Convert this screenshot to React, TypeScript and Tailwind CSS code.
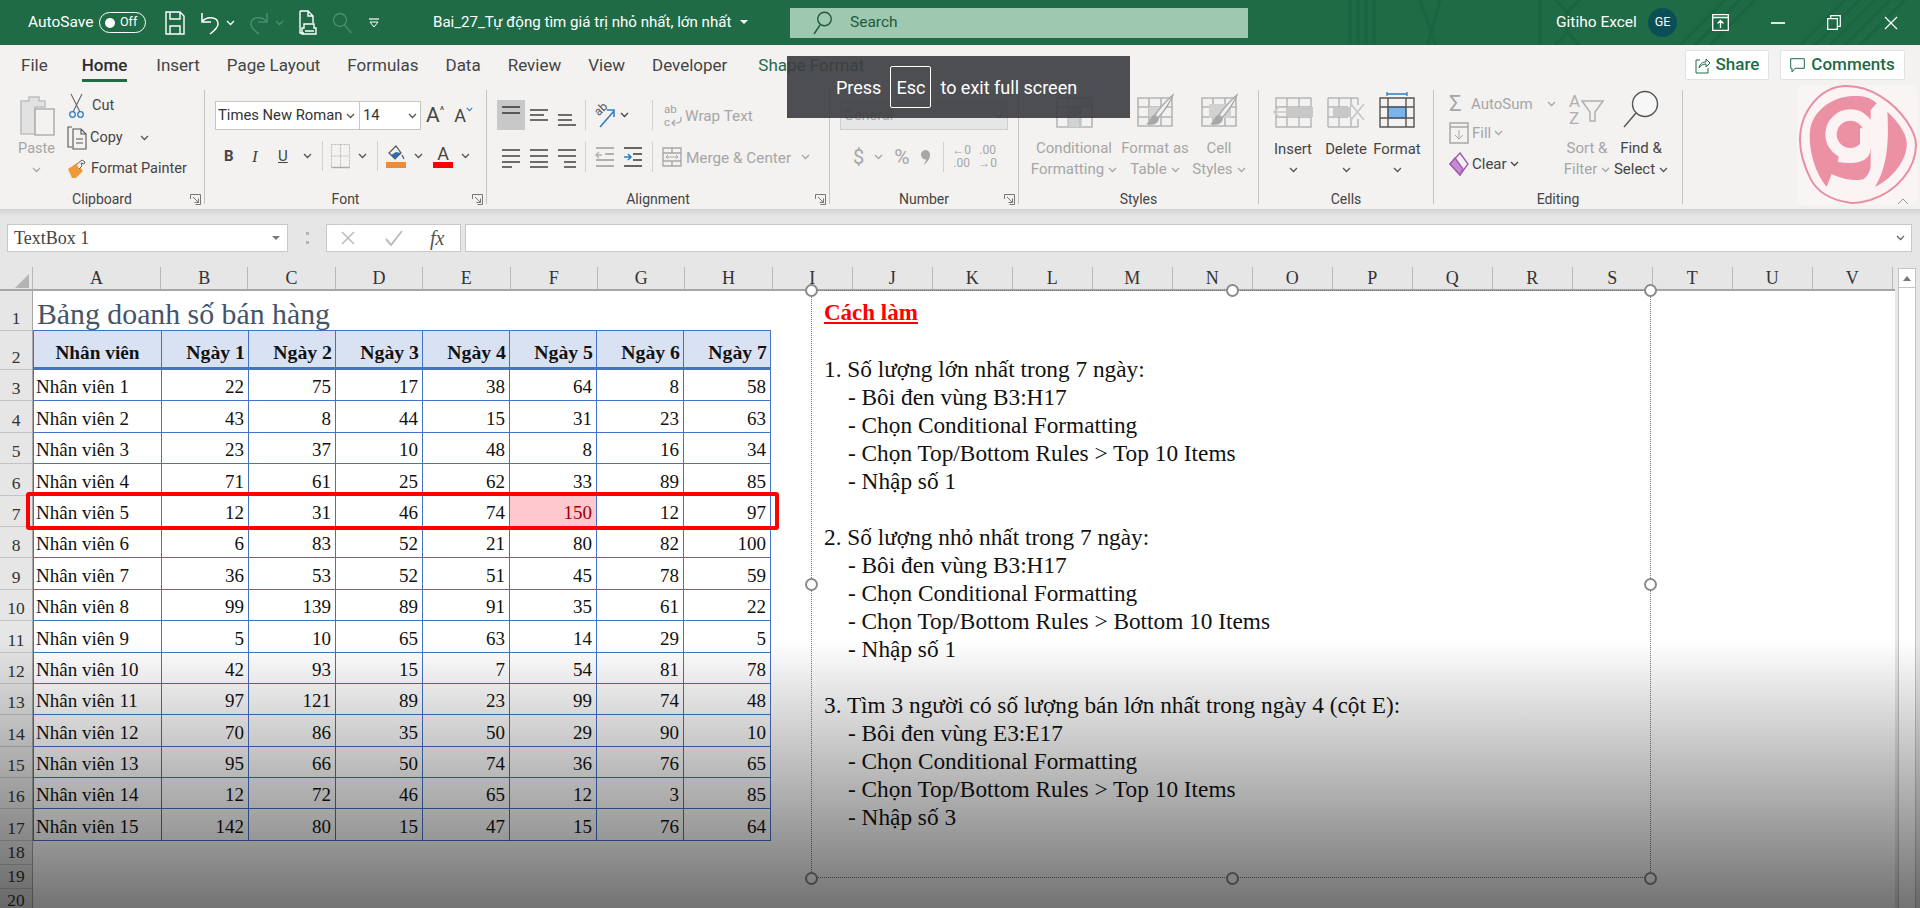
import type { ReactNode } from "react";

const rows = [
  [22, 75, 17, 38, 64, 8, 58],
  [43, 8, 44, 15, 31, 23, 63],
  [23, 37, 10, 48, 8, 16, 34],
  [71, 61, 25, 62, 33, 89, 85],
  [12, 31, 46, 74, 150, 12, 97],
  [6, 83, 52, 21, 80, 82, 100],
  [36, 53, 52, 51, 45, 78, 59],
  [99, 139, 89, 91, 35, 61, 22],
  [5, 10, 65, 63, 14, 29, 5],
  [42, 93, 15, 7, 54, 81, 78],
  [97, 121, 89, 23, 99, 74, 48],
  [70, 86, 35, 50, 29, 90, 10],
  [95, 66, 50, 74, 36, 76, 65],
  [12, 72, 46, 65, 12, 3, 85],
  [142, 80, 15, 47, 15, 76, 64],
];

const tabs = ["Insert", "Page Layout", "Formulas", "Data", "Review", "View", "Developer"];
const narrowCols = ["I", "J", "K", "L", "M", "N", "O", "P", "Q", "R", "S", "T", "U", "V"];

const noteLines = [
  { t: "", indent: false },
  { t: "1. Số lượng lớn nhất trong 7 ngày:", indent: false },
  { t: "- Bôi đen vùng B3:H17", indent: true },
  { t: "- Chọn Conditional Formatting", indent: true },
  { t: "- Chọn Top/Bottom Rules > Top 10 Items", indent: true },
  { t: "- Nhập số 1", indent: true },
  { t: "", indent: false },
  { t: "2. Số lượng nhỏ nhất trong 7 ngày:", indent: false },
  { t: "- Bôi đen vùng B3:H17", indent: true },
  { t: "- Chọn Conditional Formatting", indent: true },
  { t: "- Chọn Top/Bottom Rules > Bottom 10 Items", indent: true },
  { t: "- Nhập số 1", indent: true },
  { t: "", indent: false },
  { t: "3. Tìm 3 người có số lượng bán lớn nhất trong ngày 4 (cột E):", indent: false },
  { t: "- Bôi đen vùng E3:E17", indent: true },
  { t: "- Chọn Conditional Formatting", indent: true },
  { t: "- Chọn Top/Bottom Rules > Top 10 Items", indent: true },
  { t: "- Nhập số 3", indent: true },
];

const handles = [
  "left-[-7px] top-[-7px]",
  "left-[414px] top-[-7px]",
  "left-[832px] top-[-7px]",
  "left-[-7px] top-[287px]",
  "left-[832px] top-[287px]",
  "left-[-7px] top-[581px]",
  "left-[414px] top-[581px]",
  "left-[832px] top-[581px]",
];

function Chev({ className = "text-[#555]" }: { className?: string }) {
  return (
    <svg width="9" height="6" viewBox="0 0 9 6" className={`shrink-0 ${className}`}>
      <path d="M1 1l3.5 3.5L8 1" fill="none" stroke="currentColor" strokeWidth="1.3" />
    </svg>
  );
}

function Launcher() {
  return (
    <svg width="11" height="11" viewBox="0 0 11 11" className="absolute right-[3px] top-[5px] text-[#777]">
      <path d="M.5 5V.5H10.5V10.5H5.5M3 3l5.5 5.5M8.5 4.5v4h-4" fill="none" stroke="currentColor" />
    </svg>
  );
}

function Divider() {
  return <div className="w-px h-[114px] mt-[5px] bg-[#c4c4c4] shrink-0" />;
}

function Group({ width, label, launcher, children }: { width: string; label: string; launcher?: boolean; children: ReactNode }) {
  return (
    <div className={`flex flex-col h-full shrink-0 ${width}`}>
      <div className="flex-1 min-h-0">{children}</div>
      <div className="relative h-[20px] leading-[20px] text-center text-[14px] text-[#444]">
        {label}
        {launcher && <Launcher />}
      </div>
    </div>
  );
}

function Lines({ ys, widths, color = "#555" }: { ys: number[]; widths?: number[]; color?: string }) {
  return (
    <svg width="20" height="24" viewBox="0 0 20 24" className="shrink-0">
      {ys.map((y, i) => {
        const w = widths ? widths[i] : 18;
        return <path key={y} d={`M${widths && widths[i] < 0 ? 19 + widths[i] : 1} ${y}h${Math.abs(w)}`} stroke={color} strokeWidth="1.7" />;
      })}
    </svg>
  );
}

function SheetIcon({ children }: { children?: ReactNode }) {
  return (
    <svg width="38" height="36" viewBox="0 0 38 36" className="shrink-0">
      <g fill="none" stroke="#b5b5b5" strokeWidth="1.6">
        <path d="M2 6h34v28H2zM2 15h34M2 25h34M13 6v28M25 6v28" />
      </g>
      {children}
    </svg>
  );
}

function Brush() {
  return (
    <g>
      <path d="M37 3c-3 8-9 16-15 23l-3-3C24 16 31 8 37 3z" fill="#f3f2f1" stroke="#a8a8a8" strokeWidth="1.4" />
      <path d="M18 23c-4 1-3 6-8 9 6 2 12 0 13-5z" fill="#a8a8a8" />
    </g>
  );
}

function StackCol({ label1, label2, width, children, dim }: { label1: string; label2: string; width: string; children: ReactNode; dim?: boolean }) {
  return (
    <div className={`flex flex-col items-center ${width} ${dim ? "text-[#a6a6a6]" : "text-[#444]"}`}>
      <div className="h-[36px] flex items-end justify-center">{children}</div>
      <div className="mt-[10px] h-[21px] leading-[21px] whitespace-nowrap text-[15px]">{label1}</div>
      <div className="h-[21px] leading-[21px] whitespace-nowrap text-[15px] flex items-center gap-[4px]">
        {label2}
        <Chev className={dim ? "text-[#a6a6a6]" : "text-[#555]"} />
      </div>
    </div>
  );
}

function TitleBar() {
  return (
    <div className="relative h-[45px] shrink-0 bg-[#1e6b46] flex items-center text-white overflow-hidden">
      <svg width="640" height="45" viewBox="0 0 640 45" className="absolute right-0 top-0 text-[#1a6040]">
        <g fill="none" stroke="currentColor" strokeWidth="3" opacity="0.6">
          <path d="M70 0v45M78 0v45M86 0v45M94 0v45M140 0l16 45M160 0l-12 45M260 0v45M275 0c20 15 20 30 0 45M300 0c-20 15-20 30 0 45" />
          <path d="M400 45l45-45M415 45l45-45M430 45l45-45M520 45l45-45M535 45l45-45M550 45l45-45M565 45l45-45M580 45l45-45" />
        </g>
      </svg>
      <span className="relative ml-[28px] w-[62px] text-[15.5px] whitespace-nowrap">AutoSave</span>
      <div className="relative ml-[9px] w-[47px] h-[21px] rounded-full border border-white flex items-center pl-[5px] gap-[5px]">
        <span className="w-[10px] h-[10px] rounded-full bg-white" />
        <span className="text-[12.5px] leading-none">Off</span>
      </div>
      <svg width="20" height="24" viewBox="0 0 20 24" className="relative ml-[19px]">
        <path d="M1 1h14l4 4v18H1zM5 1v7h10V1M5 23v-8h10v8" fill="none" stroke="white" strokeWidth="1.4" />
      </svg>
      <svg width="20" height="24" viewBox="0 0 20 24" className="relative ml-[15px]">
        <path d="M2 2v9h9M2 11C6 5 18 5 18 13c0 4-4 7-8 10" fill="none" stroke="white" strokeWidth="1.5" />
      </svg>
      <Chev className="relative ml-[6px] text-white" />
      <svg width="20" height="24" viewBox="0 0 20 24" className="relative ml-[14px]">
        <path d="M18 2v9H9M18 11C14 5 2 5 2 13c0 4 4 7 8 10" fill="none" stroke="#4c8d6d" strokeWidth="1.5" />
      </svg>
      <Chev className="relative ml-[6px] text-[#4c8d6d]" />
      <svg width="18" height="26" viewBox="0 0 18 26" className="relative ml-[15px]">
        <path d="M1 1h8l5 5v7M9 1v5h5M1 1v22h4M5 14h10v4h2v6H3v-6h2zM6 21h9" fill="none" stroke="white" strokeWidth="1.4" />
      </svg>
      <svg width="20" height="22" viewBox="0 0 20 22" className="relative ml-[15px]">
        <circle cx="8" cy="8" r="6.5" fill="none" stroke="#4c8d6d" strokeWidth="1.4" />
        <path d="M12.5 13l7 8" stroke="#4c8d6d" strokeWidth="1.4" />
      </svg>
      <svg width="10" height="10" viewBox="0 0 10 10" className="relative ml-[17px]">
        <path d="M0 1h10" stroke="white" strokeWidth="1.2" />
        <path d="M1 4h8l-4 5z" fill="none" stroke="white" strokeWidth="1" />
      </svg>
      <div className="relative ml-[54px] w-[357px] flex items-center gap-[9px] text-[15.1px] whitespace-nowrap">
        <span>Bai_27_Tự động tìm giá trị nhỏ nhất, lớn nhất</span>
        <span className="w-0 h-0 border-x-[4px] border-x-transparent border-t-[4px] border-t-white" />
      </div>
      <div className="relative w-[458px] h-[30px] bg-[#9fc8b0] flex items-center pl-[23px] text-[#1d5a3e] text-[15.5px]">
        <svg width="19" height="24" viewBox="0 0 19 24">
          <circle cx="11.5" cy="8" r="6.8" fill="none" stroke="#1d5a3e" strokeWidth="1.4" />
          <path d="M7 14l-6 9" stroke="#1d5a3e" strokeWidth="1.4" />
        </svg>
        <span className="ml-[18px]">Search</span>
      </div>
      <span className="relative ml-[308px] w-[79px] text-[15.5px] whitespace-nowrap">Gitiho Excel</span>
      <div className="relative ml-[13px] w-[29px] h-[29px] rounded-full bg-[#0b4f56] flex items-center justify-center text-[12.5px]">GE</div>
      <svg width="17" height="17" viewBox="0 0 17 17" className="relative ml-[35px]">
        <path d="M.7.7h15.6v15.6H.7zM.7 3.5h15.6M8.5 14V7M5.5 9.5l3-3 3 3" fill="none" stroke="white" strokeWidth="1.3" />
      </svg>
      <div className="relative ml-[42px] w-[14px] h-[2px] bg-[#dfe9e3]" />
      <svg width="14" height="15" viewBox="0 0 14 15" className="relative ml-[42px]">
        <path d="M.7 3.7h9.6v10.6H.7zM3.7 3.7V.7h9.6v10.6h-3" fill="none" stroke="white" strokeWidth="1.2" />
      </svg>
      <svg width="14" height="14" viewBox="0 0 14 14" className="relative ml-[43px]">
        <path d="M1 1l12 12M13 1L1 13" stroke="white" strokeWidth="1.2" />
      </svg>
    </div>
  );
}

function TabRow() {
  return (
    <div className="h-[40px] shrink-0 bg-[#f3f2f1] flex pl-[21px] pt-[2px] gap-[27px] text-[17px] text-[#444]">
      <div className="leading-[36px] mr-[7px]">File</div>
      <div className="h-[35px] leading-[36px] mr-[2px] border-b-[3px] border-[#1e6b46] font-medium text-[#2c2c2c]">Home</div>
      {tabs.map(t => (
        <div key={t} className="leading-[36px] whitespace-nowrap">
          {t}
        </div>
      ))}
      <div className="leading-[36px] ml-[4px] whitespace-nowrap text-[#1e6b46]">Shape Format</div>
      <div className="ml-auto mr-[15px] flex gap-[11px] pt-[3px] text-[#1e6b46] font-medium">
        <div className="w-[84px] h-[30px] bg-white border border-[#e2e2e2] rounded-[2px] flex items-center justify-center gap-[6px]">
          <svg width="15" height="17" viewBox="0 0 15 17">
            <path d="M5 3H1v13h12v-5M4 11c1-5 4-6 7-6V2l4 4-4 4V7c-3 0-5 1-7 4z" fill="none" stroke="#1e6b46" strokeWidth="1" />
          </svg>
          Share
        </div>
        <div className="w-[125px] h-[30px] bg-white border border-[#e2e2e2] rounded-[2px] flex items-center justify-center gap-[6px]">
          <svg width="15" height="15" viewBox="0 0 15 15">
            <path d="M.7.7h13.6v9.6H5L2 14v-3.7H.7z" fill="none" stroke="#1e6b46" strokeWidth="1" />
          </svg>
          Comments
        </div>
      </div>
    </div>
  );
}

function Clipboard() {
  return (
    <Group width="w-[204px]" label="Clipboard" launcher>
      <div className="flex">
        <div className="ml-[19px] w-[35px] flex flex-col items-center text-[#a6a6a6] text-[14.5px]">
          <svg width="36" height="42" viewBox="0 0 36 42" className="mt-[9px]">
            <path d="M2 7h8V3h10v4h6v6H16v27H2z" fill="#e2e2e2" stroke="#c0c0c0" strokeWidth="1.6" />
            <path d="M16 15h19v26H16z" fill="#f3f2f1" stroke="#b0b0b0" strokeWidth="1.6" />
          </svg>
          <div className="mt-[3px] h-[20px] leading-[20px]">Paste</div>
          <Chev className="mt-[8px] text-[#a6a6a6]" />
        </div>
        <div className="ml-[13px] pt-[5px] flex flex-col text-[14.5px] text-[#444]">
          <div className="h-[32px] flex items-center gap-[8px]">
            <svg width="15" height="26" viewBox="0 0 15 26" className="ml-[2px]">
              <path d="M2 1l9 18M13 1L4 19" stroke="#666" strokeWidth="1.1" />
              <circle cx="3.5" cy="21.5" r="2.8" fill="none" stroke="#2f7fc4" strokeWidth="1.3" />
              <circle cx="11.5" cy="21.5" r="2.8" fill="none" stroke="#2f7fc4" strokeWidth="1.3" />
            </svg>
            Cut
          </div>
          <div className="h-[31px] flex items-center gap-[3px]">
            <svg width="20" height="24" viewBox="0 0 20 24">
              <path d="M5 1H1v20h4M6 3h8l5 5v15H6zM14 3v5h5M9 13h7M9 17h7" fill="none" stroke="#555" strokeWidth="1.1" />
            </svg>
            Copy
            <Chev className="ml-[14px] text-[#555]" />
          </div>
          <div className="h-[31px] flex items-center gap-[4px]">
            <svg width="20" height="22" viewBox="0 0 20 22">
              <path d="M1 11l9-6 6 8-7 7H5z" fill="#ef9a3a" />
              <path d="M10 6l5-4 3 2-1 2-3-1 1 3-3 3" fill="#f3f2f1" stroke="#666" strokeWidth="1" />
            </svg>
            Format Painter
          </div>
        </div>
      </div>
    </Group>
  );
}

function FontGroup() {
  return (
    <Group width="w-[281px]" label="Font" launcher>
      <div className="pl-[10px] pt-[16px] text-[#444]">
        <div className="flex items-center h-[29px]">
          <div className="w-[145px] h-full bg-white border border-[#c8c6c4] flex items-center pl-[2px] text-[14.8px] whitespace-nowrap text-[#333]">
            Times New Roman
            <Chev className="ml-[3px] text-[#555]" />
          </div>
          <div className="w-[61px] h-full bg-white border-y border-r border-[#c8c6c4] flex items-center pl-[3px] text-[14.8px] text-[#333]">
            14
            <Chev className="ml-auto mr-[3px] text-[#555]" />
          </div>
          <span className="ml-[5px] text-[21px] leading-none">A</span>
          <span className="text-[11px] mb-[10px] leading-none">^</span>
          <span className="ml-[10px] text-[18px] leading-none">A</span>
          <svg width="7" height="5" viewBox="0 0 9 6" className="mb-[12px] text-[#2f7fc4]">
            <path d="M1 1l3.5 3.5L8 1" fill="none" stroke="currentColor" strokeWidth="1.5" />
          </svg>
        </div>
        <div className="flex items-center h-[30px] mt-[11px]">
          <span className="ml-[9px] w-[10px] text-[15px] font-bold text-[#444] leading-none">B</span>
          <span className="ml-[18px] w-[8px] font-['Liberation_Serif',serif] italic text-[17px] text-[#444] leading-none">I</span>
          <span className="ml-[18px] w-[12px] text-[15px] text-[#444] underline leading-none">U</span>
          <Chev className="ml-[13px] text-[#555]" />
          <div className="ml-[10px] w-px h-[30px] bg-[#d0d0d0]" />
          <svg width="19" height="25" viewBox="0 0 19 25" className="ml-[8px]">
            <path d="M.5.5h18v23H.5zM9.5.5v23M.5 12h18" fill="none" stroke="#bbb" strokeDasharray="2 1" />
            <path d="M.5 23.5h18" stroke="#aaa" strokeWidth="1.4" />
          </svg>
          <Chev className="ml-[8px] text-[#555]" />
          <div className="ml-[10px] w-px h-[30px] bg-[#d0d0d0]" />
          <div className="ml-[8px] w-[20px] flex flex-col items-center">
            <svg width="17" height="17" viewBox="0 0 17 17">
              <path d="M8 1L1 8l6 6 6-6zM14 10l2 4" fill="#f3f2f1" stroke="#555" strokeWidth="1.2" />
              <path d="M8 7l5 1-6 6-4-4z" fill="#2f6ea8" />
            </svg>
            <div className="w-[20px] h-[6px] bg-[#ed8c33]" />
          </div>
          <Chev className="ml-[8px] text-[#555]" />
          <div className="ml-[10px] w-[20px] flex flex-col items-center">
            <span className="text-[18px] leading-[17px] text-[#444]">A</span>
            <div className="w-[20px] h-[6px] bg-[#f00]" />
          </div>
          <Chev className="ml-[8px] text-[#555]" />
        </div>
      </div>
    </Group>
  );
}

function Alignment() {
  return (
    <Group width="w-[342px]" label="Alignment" launcher>
      <div className="pl-[10px] pt-[15px]">
        <div className="flex items-center h-[30px]">
          <div className="w-[28px] h-[30px] bg-[#c8c8c8] flex items-center justify-center">
            <Lines ys={[4, 10]} color="#444" />
          </div>
          <div className="w-[28px] flex justify-center">
            <Lines ys={[7, 12, 17]} widths={[18, 14, 18]} />
          </div>
          <div className="w-[28px] flex justify-center">
            <Lines ys={[12, 17, 22]} widths={[14, 14, 18]} />
          </div>
          <div className="ml-[4px] w-px h-[30px] bg-[#d0d0d0]" />
          <div className="ml-[8px] w-[22px] h-[25px] relative">
            <span className="absolute left-0 top-[-1px] text-[12px] leading-[14px] text-[#555] -rotate-45">ab</span>
            <svg width="22" height="25" viewBox="0 0 22 25" className="absolute left-0 top-0">
              <path d="M6 24L20 8M13 7h7v7" fill="none" stroke="#2f7fc4" strokeWidth="1.6" />
            </svg>
          </div>
          <Chev className="ml-[4px] text-[#444]" />
          <div className="ml-[23px] w-px h-[30px] bg-[#d0d0d0]" />
          <div className="ml-[11px] flex items-center text-[15.3px] text-[#a6a6a6]">
            <div className="w-[19px] flex flex-col gap-px text-[11.5px] leading-[12px] text-[#a0a0a0]">
              <span>ab</span>
              <div className="flex items-center gap-px">
                <span>c</span>
                <svg width="11" height="9" viewBox="0 0 11 9">
                  <path d="M10 0v2c0 3-2 4-4 4H1M4 3L1 6l3 3" fill="none" stroke="#a8a8a8" strokeWidth="1.2" />
                </svg>
              </div>
            </div>
            <span className="ml-[2px] mt-[2px] whitespace-nowrap">Wrap Text</span>
          </div>
        </div>
        <div className="flex items-center h-[30px] mt-[12px]">
          <div className="w-[28px] flex justify-center">
            <Lines ys={[5, 11, 17, 22]} widths={[18, 18, 18, 10]} />
          </div>
          <div className="w-[28px] flex justify-center">
            <Lines ys={[5, 11, 17, 22]} widths={[18, 18, 18, 18]} />
          </div>
          <div className="w-[28px] flex justify-center">
            <Lines ys={[5, 11, 17, 22]} widths={[18, 18, -12, -12]} />
          </div>
          <div className="ml-[4px] w-px h-[30px] bg-[#d0d0d0]" />
          <svg width="19" height="22" viewBox="0 0 19 22" className="ml-[9px]">
            <path d="M1 2h18M10 8h9M1 14h18M1 20h18" stroke="#b0b0b0" strokeWidth="2" />
            <path d="M7 9H1M4 6L1 9l3 3" fill="none" stroke="#b0b0b0" strokeWidth="1.4" />
          </svg>
          <svg width="19" height="22" viewBox="0 0 19 22" className="ml-[9px]">
            <path d="M1 2h18M10 8h9M10 14h9M1 20h18" stroke="#666" strokeWidth="2" />
            <path d="M1 11h7M5 8l3 3-3 3" fill="none" stroke="#2f7fc4" strokeWidth="1.6" />
          </svg>
          <div className="ml-[10px] w-px h-[30px] bg-[#d0d0d0]" />
          <svg width="20" height="20" viewBox="0 0 20 20" className="ml-[9px]">
            <path d="M1 1h18v18H1zM1 6h18M1 14h18M10 1v5M10 14v5" fill="none" stroke="#a8a8a8" strokeWidth="1.4" />
            <path d="M4 10h12M6 8l-2 2 2 2M14 8l2 2-2 2" fill="none" stroke="#a8a8a8" />
          </svg>
          <span className="ml-[4px] mt-[2px] text-[15.3px] whitespace-nowrap text-[#a6a6a6]">Merge &amp; Center</span>
          <Chev className="ml-[10px] text-[#a6a6a6]" />
        </div>
      </div>
    </Group>
  );
}

function NumberGroup() {
  return (
    <Group width="w-[188px]" label="Number" launcher>
      <div className="pl-[10px] pt-[16px] text-[#a6a6a6]">
        <div className="w-[168px] h-[29px] bg-[#e6e6e6] border border-[#cfcfcf] flex items-center pl-[3px] text-[14.5px]">
          General
          <Chev className="ml-auto mr-[4px] text-[#a6a6a6]" />
        </div>
        <div className="flex items-center h-[30px] mt-[12px]">
          <span className="ml-[13px] text-[20px] leading-none">$</span>
          <Chev className="ml-[10px] text-[#a6a6a6]" />
          <span className="ml-[11px] text-[21px] leading-none">%</span>
          <svg width="9" height="15" viewBox="0 0 9 15" className="ml-[11px]">
            <path d="M4.5 0a4.5 4.5 0 0 1 4.5 5c0 4-3 8-7 10 2-2 3-4 3-5.500a4.500 4.500 0 0 1-.5-9.500z" fill="#a6a6a6" />
          </svg>
          <div className="ml-[13px] w-px h-[30px] bg-[#d0d0d0]" />
          <div className="ml-[8px] text-[12px] leading-[13px] text-center w-[20px]">←0<br />.00</div>
          <div className="ml-[6px] text-[12px] leading-[13px] text-center w-[20px]">.00<br />→0</div>
        </div>
      </div>
    </Group>
  );
}

function Styles() {
  return (
    <Group width="w-[239px]" label="Styles">
      <div className="pl-[10px] pt-[7px] flex">
        <StackCol width="w-[90px]" label1="Conditional" label2="Formatting" dim>
          <svg width="37" height="31" viewBox="0 0 37 31">
            <path d="M1 1h35v29H1z" fill="#f3f2f1" stroke="#b5b5b5" strokeWidth="1.6" />
            <path d="M12 10h14v20H12zM26 1h10v9H26z" fill="#d2d2d2" />
            <path d="M1 10h35M1 20h35M12 1v29M24 1v29" stroke="#b5b5b5" fill="none" />
          </svg>
        </StackCol>
        <StackCol width="w-[72px]" label1="Format as" label2="Table" dim>
          <SheetIcon>
            <path d="M13 15h12v10H13z" fill="#d2d2d2" />
            <Brush />
          </SheetIcon>
        </StackCol>
        <StackCol width="w-[56px]" label1="Cell" label2="Styles" dim>
          <SheetIcon>
            <path d="M9 12h22v14H9z" fill="#d2d2d2" />
            <Brush />
          </SheetIcon>
        </StackCol>
      </div>
    </Group>
  );
}

function CellCol({ label, width, children }: { label: string; width: string; children: ReactNode }) {
  return (
    <div className={`flex flex-col items-center text-[14.8px] text-[#444] ${width}`}>
      <div className="h-[36px] flex items-end">{children}</div>
      <div className="mt-[11px] h-[20px] leading-[20px]">{label}</div>
      <Chev className="mt-[8px] text-[#555]" />
    </div>
  );
}

function Cells() {
  return (
    <Group width="w-[174px]" label="Cells">
      <div className="pl-[7px] pt-[7px] flex">
        <CellCol label="Insert" width="w-[54px]">
          <svg width="40" height="31" viewBox="0 0 40 31">
            <path d="M3 1h35v29H3zM3 10h35M3 20h35M14 1v29M26 1v29" fill="none" stroke="#b5b5b5" strokeWidth="1.4" />
            <path d="M14 10h26v10H14z" fill="#c8c8c8" />
            <path d="M1 15h14M7 9l-6 6 6 6" fill="none" stroke="#c8c8c8" strokeWidth="1.6" />
          </svg>
        </CellCol>
        <CellCol label="Delete" width="w-[52px]">
          <svg width="38" height="31" viewBox="0 0 38 31">
            <path d="M1 1h30M1 30h30M1 10h20M1 20h20M1 1v29M12 1v29M24 1v9M24 20v10M31 1v7M31 22v8" fill="none" stroke="#b5b5b5" strokeWidth="1.4" />
            <path d="M6 10h18v10H6z" fill="#c8c8c8" />
            <path d="M24 7l13 16M37 7L24 23" fill="none" stroke="#c8c8c8" strokeWidth="1.6" />
          </svg>
        </CellCol>
        <CellCol label="Format" width="w-[50px]">
          <svg width="36" height="37" viewBox="0 0 36 37">
            <path d="M8 3h20M8 1v4M28 1v4" stroke="#2f7fc4" strokeWidth="1.3" fill="none" />
            <path d="M9 16h18v11H9z" fill="#7ab4ee" stroke="#2f7fc4" />
            <path d="M1 7h34v29H1zM1 16h34M1 27h34M9 7v29M27 7v29" fill="none" stroke="#555" strokeWidth="1.4" />
          </svg>
        </CellCol>
      </div>
    </Group>
  );
}

function Editing() {
  return (
    <Group width="w-[248px]" label="Editing">
      <div className="flex">
        <div className="pl-[15px] pt-[5px] w-[123px] flex flex-col text-[15px]">
          <div className="h-[28px] flex items-center gap-[3px] text-[#a6a6a6]">
            <span className="text-[22px] leading-none w-[19px]">Σ</span>
            AutoSum
            <Chev className="ml-[11px] text-[#a6a6a6]" />
          </div>
          <div className="h-[26px] flex items-center gap-[3px] text-[#a6a6a6] mt-[2px]">
            <svg width="20" height="22" viewBox="0 0 20 22">
              <path d="M1 1h18v20H1zM1 5h18" fill="none" stroke="#a8a8a8" strokeWidth="1.5" />
              <path d="M10 8v9M6 13l4 4 4-4" fill="none" stroke="#a8a8a8" />
            </svg>
            Fill
            <Chev className="text-[#a6a6a6]" />
          </div>
          <div className="h-[32px] flex items-center gap-[3px] text-[#444] mt-[2px]">
            <svg width="20" height="24" viewBox="0 0 20 24">
              <path d="M11 1l8 11-8 11-10-11z" fill="#f3f2f1" stroke="#a45cb0" strokeWidth="1.4" />
              <path d="M1 12l5-6 8 11-3 6z" fill="#c58ad0" stroke="#a45cb0" strokeWidth="1.4" />
            </svg>
            Clear
            <Chev className="text-[#444]" />
          </div>
        </div>
        <div className="pt-[7px]">
          <StackCol width="w-[60px]" label1="Sort &" label2="Filter" dim>
            <div className="flex items-center h-[36px]">
              <div className="flex flex-col text-[17px] leading-[17px] text-[#b0b0b0]">
                <span>A</span>
                <span>Z</span>
              </div>
              <svg width="24" height="24" viewBox="0 0 24 24" className="ml-[1px]">
                <path d="M1 3h21l-8 11v9H9v-9z" fill="none" stroke="#b0b0b0" strokeWidth="1.5" />
              </svg>
            </div>
          </StackCol>
        </div>
        <div className="pt-[7px]">
          <StackCol width="w-[48px]" label1="Find &" label2="Select">
            <svg width="36" height="38" viewBox="0 0 36 38" className="overflow-visible">
              <circle cx="22" cy="14" r="12.5" fill="#f7f7f7" stroke="#555" strokeWidth="1.4" />
              <path d="M13 23L1 37" stroke="#555" strokeWidth="1.4" />
            </svg>
          </StackCol>
        </div>
      </div>
    </Group>
  );
}

function FormulaBar() {
  return (
    <div className="h-[58px] shrink-0 pt-[15px] pl-[7px] flex items-start bg-linear-to-b from-[#d2d2d2] from-0% to-[#e6e6e6] to-[12%]">
      <div className="w-[281px] h-[28px] bg-white border border-[#c8c8c8] flex items-center pl-[6px] font-['Liberation_Serif',serif] text-[18px] text-[#444]">
        TextBox 1
        <span className="ml-auto mr-[7px] w-0 h-0 border-x-[4px] border-x-transparent border-t-[4px] border-t-[#777]" />
      </div>
      <div className="ml-[18px] mt-[8px] w-[3px] h-[12px] border-y-[3px] border-[#b5b5b5]" />
      <div className="ml-[17px] w-[135px] h-[28px] bg-white border border-[#c8c8c8] flex items-center">
        <svg width="16" height="16" viewBox="0 0 16 16" className="ml-[13px]">
          <path d="M2 2l12 12M14 2L2 14" stroke="#bdbdbd" strokeWidth="1.6" />
        </svg>
        <svg width="18" height="16" viewBox="0 0 18 16" className="ml-[29px]">
          <path d="M1 9l5 6L17 1" fill="none" stroke="#bdbdbd" strokeWidth="2" />
        </svg>
        <span className="ml-[27px] font-['Liberation_Serif',serif] italic text-[20px] leading-none text-[#555]">fx</span>
      </div>
      <div className="ml-[4px] w-[1447px] h-[28px] bg-white border border-[#c8c8c8] flex items-center justify-end pr-[6px]">
        <Chev className="text-[#666]" />
      </div>
    </div>
  );
}

function RowNum({ n, height }: { n: number; height: string }) {
  return (
    <div className={`${height} flex items-end justify-center border-b border-[#c4c4c4] text-[17.5px] leading-[24px] text-[#333]`}>
      {n}
    </div>
  );
}

function Cell({ value, hot }: { value: number; hot: boolean }) {
  return (
    <div
      className={`h-[31.4px] border-r border-b border-[#4472c4] flex items-end justify-end pr-[4px] leading-[26px] ${
        hot ? "bg-[#ffc7ce] text-[#9c0006]" : ""
      }`}
    >
      {value}
    </div>
  );
}

function Sheet() {
  return (
    <div className="flex-1 min-h-0 flex bg-white font-['Liberation_Serif',serif] text-[#111]">
      <div className="w-[1895px] flex flex-col">
        <div className="h-[22px] shrink-0 flex bg-[#e6e6e6] border-b-2 border-[#a6a6a6] box-content text-[18px] leading-[22px] text-[#333] -mb-[2px] relative">
          <div className="w-[33px] relative border-r border-[#b8b8b8]">
            <div className="absolute right-[3px] bottom-[1px] w-0 h-0 border-l-[14px] border-l-transparent border-b-[14px] border-b-[#b4b4b4]" />
          </div>
          <div className="w-[128px] text-center border-r border-[#b8b8b8]">A</div>
          {["B", "C", "D", "E", "F", "G", "H"].map(c => (
            <div key={c} className="w-[87.4px] text-center border-r border-[#b8b8b8]">
              {c}
            </div>
          ))}
          {narrowCols.map(c => (
            <div key={c} className="w-[80px] text-center border-r border-[#b8b8b8]">
              {c}
            </div>
          ))}
        </div>
        <div className="flex flex-1 min-h-0 overflow-hidden">
          <div className="w-[33px] shrink-0 bg-[#e6e6e6] border-r border-[#a6a6a6] flex flex-col">
            <RowNum n={1} height="h-[42px] shrink-0" />
            <RowNum n={2} height="h-[39px] shrink-0" />
            {rows.map((_, i) => (
              <RowNum key={i} n={i + 3} height="h-[31.4px] shrink-0" />
            ))}
            <RowNum n={18} height="h-[24px] shrink-0" />
            <RowNum n={19} height="h-[24px] shrink-0" />
            <RowNum n={20} height="h-[24px] shrink-0" />
          </div>
          <div className="flex-1">
            <div className="h-[42px] pl-[4px] text-[29.8px] leading-[50px] text-[#44546a] whitespace-nowrap">Bảng doanh số bán hàng</div>
            <div className="w-[738px] text-[19px] border-l border-t border-[#4472c4] grid grid-cols-[128px_repeat(7,1fr)] -mt-px">
              <div className="h-[39px] bg-[#d9e2f3] border-r border-b-[3px] border-[#4472c4] flex items-end justify-center font-bold text-[19.3px] leading-[29px]">Nhân viên</div>
              {[1, 2, 3, 4, 5, 6, 7].map(d => (
                <div key={d} className="h-[39px] bg-[#d9e2f3] border-r border-b-[3px] border-[#4472c4] flex items-end justify-end pr-[3px] font-bold text-[19.8px] leading-[29px]">
                  Ngày {d}
                </div>
              ))}
              {rows.map((r, i) => (
                <div key={i} className="contents">
                  <div className="h-[31.4px] border-r border-b border-[#4472c4] pl-[2px] flex items-end leading-[26px]">Nhân viên {i + 1}</div>
                  {r.map((v, j) => (
                    <Cell key={j} value={v} hot={i === 4 && j === 4} />
                  ))}
                </div>
              ))}
            </div>
          </div>
        </div>
      </div>
      <div className="flex-1 bg-[#e6e6e6] pl-[3px] pr-[4px] flex flex-col">
        <div className="h-[20px] mt-px shrink-0 bg-white border border-[#c4c4c4] flex items-center justify-center">
          <span className="w-0 h-0 border-x-[4px] border-x-transparent border-b-[5px] border-b-[#777]" />
        </div>
        <div className="flex-1 bg-white border-x border-[#c4c4c4]" />
      </div>
    </div>
  );
}

function TextBox() {
  return (
    <div className="absolute left-[811px] top-[290px] w-[840px] h-[588px] border border-dotted border-[#777] font-['Liberation_Serif',serif] text-[23.3px] leading-[28px] text-[#111] pl-[12px] pt-[8px] whitespace-nowrap">
      <div className="h-[28px] text-[#ff0000] font-bold underline text-[23px]">Cách làm</div>
      {noteLines.map((l, i) => (
        <div key={i} className={`h-[28px] ${l.indent ? "pl-[24px]" : ""}`}>
          {l.t}
        </div>
      ))}
      {handles.map(h => (
        <div key={h} className={`absolute w-[13px] h-[13px] rounded-full bg-white border-2 border-[#8a8a8a] ${h}`} />
      ))}
    </div>
  );
}

function Logo() {
  return (
    <div className="absolute left-[1797px] top-[85px] w-[120px] h-[120px] bg-[#f9f5f5] rounded-[6px]">
      <svg width="120" height="120" viewBox="0 0 360 360">
        <path d="M9 165C9 80 70 3 149 3c71 0 141 47 181 107 20 30 27 55 27 70 0 70-57 140-137 165-30 8-50 10-61 8-59-8-99-33-119-73C20 240 9 205 9 165z" fill="#fbf3f4" stroke="#e98fa2" strokeWidth="6" />
        <path d="M239 55c-24-25-59-22-70-22C100 35 50 80 40 130c-8 50 10 130 49 175l15-38c36 18 76 21 95 16 16-13 22-28 22-43V75z" fill="#ec90a4" />
        <circle cx="160" cy="148" r="58" fill="none" stroke="#fbf3f4" strokeWidth="34" />
        <path d="M205 130v60c0 28-35 32-80 25" fill="none" stroke="#fbf3f4" strokeWidth="32" />
        <path d="M271 80c38 35 63 75 58 105-5 50-50 100-95 120 25-40 45-100 37-225z" fill="#ec90a4" />
      </svg>
      <svg width="12" height="7" viewBox="0 0 12 7" className="absolute left-[100px] top-[113px]">
        <path d="M1 6l5-5 5 5" fill="none" stroke="#999" />
      </svg>
    </div>
  );
}

export default function App() {
  return (
    <div className="relative w-[1920px] h-[908px] overflow-hidden flex flex-col bg-white font-['Roboto',sans-serif]">
      <TitleBar />
      <TabRow />
      <div className="h-[124px] shrink-0 bg-[#f3f2f1] flex">
        <Clipboard />
        <Divider />
        <FontGroup />
        <Divider />
        <Alignment />
        <Divider />
        <NumberGroup />
        <Divider />
        <Styles />
        <Divider />
        <Cells />
        <Divider />
        <Editing />
        <Divider />
      </div>
      <FormulaBar />
      <Sheet />

      <Logo />
      <TextBox />

      {/* red highlight around row 7 */}
      <div className="absolute left-[26px] top-[492px] w-[753px] h-[38px] border-4 border-[#ff0000] rounded-[3px]" />

      {/* video fade at the bottom */}
      <div className="absolute left-0 right-0 bottom-0 h-[268px] bg-linear-to-b from-black/0 to-black/55 pointer-events-none" />

      {/* browser full screen hint */}
      <div className="absolute left-[787px] top-[56px] w-[343px] h-[62px] bg-[#3b3c40]/90 flex items-center pl-[49px] text-white text-[18px]">
        Press
        <span className="ml-[9px] w-[41px] h-[42px] border border-white rounded-[2px] flex items-center justify-center">Esc</span>
        <span className="ml-[9px] whitespace-nowrap">to exit full screen</span>
      </div>
    </div>
  );
}
